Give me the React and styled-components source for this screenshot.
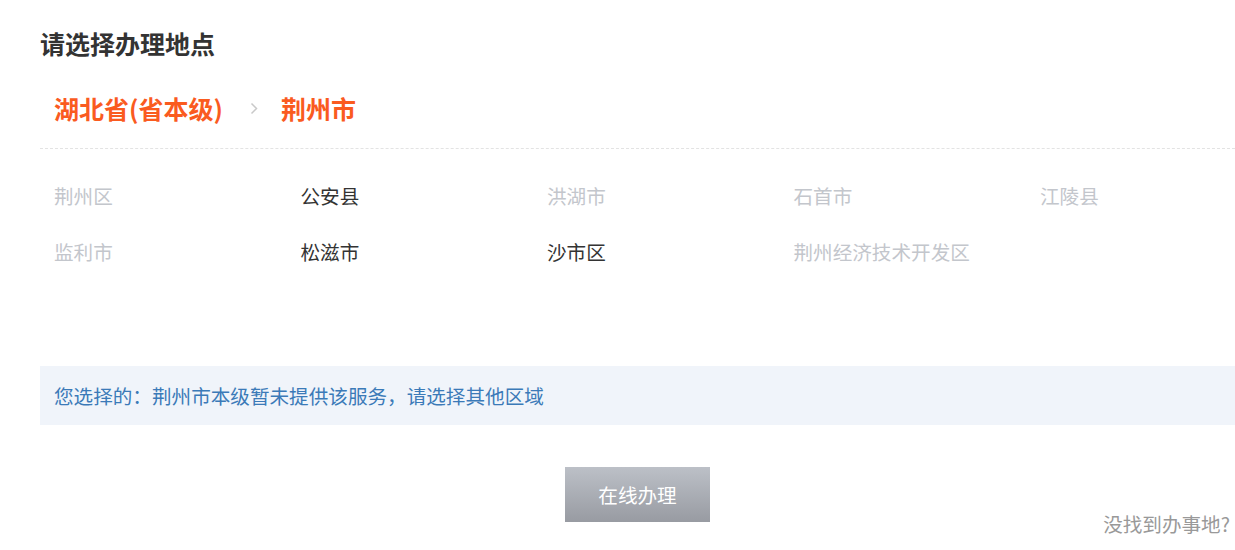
import React from 'react';
import styled, { createGlobalStyle } from 'styled-components';

const GlobalStyle = createGlobalStyle`
    body {
        margin: 0;
        background: #fff;
        font-family: "Noto Sans CJK SC", "Noto Sans", sans-serif;
    }
`;

const Page = styled.div`
    width: 1195px;
    padding: 28px 0 0 40px;
`;

const Title = styled.h2`
    margin: 0;
    font-size: 25px;
    line-height: 30px;
    font-weight: 700;
    color: #333;
`;

const Crumbs = styled.div`
    display: flex;
    align-items: center;
    margin-top: 35px;
    padding: 0 14px 25px;
    border-bottom: 1px dashed #e3e3e3;
`;

const Crumb = styled.span`
    font-size: 25px;
    line-height: 30px;
    font-weight: 700;
    color: #fa5b1f;
`;

const Sep = styled.span`
    display: flex;
    margin: 0 23px 0 27px;
`;

const Areas = styled.div`
    display: grid;
    grid-template-columns: repeat(5, 246.5px);
    padding: 19px 0 0 14px;
`;

const Area = styled.div`
    font-size: 19.6px;
    line-height: 56px;
    color: ${(props) => (props.active ? '#333' : '#c3c6cc')};
    cursor: ${(props) => (props.active ? 'pointer' : 'default')};
`;

const Notice = styled.div`
    margin-top: 86px;
    height: 59px;
    display: flex;
    align-items: center;
    padding-left: 14px;
    background: #f0f4fa;
    font-size: 19.6px;
    color: #3b7ab8;
`;

const Footer = styled.div`
    display: grid;
    grid-template-columns: 1fr auto 1fr;
    align-items: start;
    margin-top: 42px;
`;

const Button = styled.button`
    grid-column: 2;
    width: 145px;
    height: 55px;
    border: none;
    background: linear-gradient(#bcc0c7, #989ba2);
    color: #fff;
    font-family: inherit;
    font-size: 19.6px;
`;

const Missing = styled.a`
    justify-self: end;
    margin: 45px 5px 0 0;
    font-size: 19.6px;
    line-height: 24px;
    color: #999;
    text-decoration: none;
`;

const areas = [
    { name: '荆州区' },
    { name: '公安县', active: true },
    { name: '洪湖市' },
    { name: '石首市' },
    { name: '江陵县' },
    { name: '监利市' },
    { name: '松滋市', active: true },
    { name: '沙市区', active: true },
    { name: '荆州经济技术开发区' },
];

const App = () => {
    return (
        <Page>
            <GlobalStyle />
            <Title>请选择办理地点</Title>
            <Crumbs>
                <Crumb>湖北省(省本级)</Crumb>
                <Sep>
                    <svg width="8" height="13" viewBox="0 0 8 13">
                        <path d="M1.5 1.5 L6.5 6.5 L1.5 11.5" fill="none" stroke="#c9c9c9" strokeWidth="1.5" />
                    </svg>
                </Sep>
                <Crumb>荆州市</Crumb>
            </Crumbs>
            <Areas>
                {areas.map((a) => (
                    <Area key={a.name} active={a.active}>{a.name}</Area>
                ))}
            </Areas>
            <Notice>您选择的：荆州市本级暂未提供该服务，请选择其他区域</Notice>
            <Footer>
                <Button>在线办理</Button>
                <Missing href="#">没找到办事地?</Missing>
            </Footer>
        </Page>
    );
};

export default App;
